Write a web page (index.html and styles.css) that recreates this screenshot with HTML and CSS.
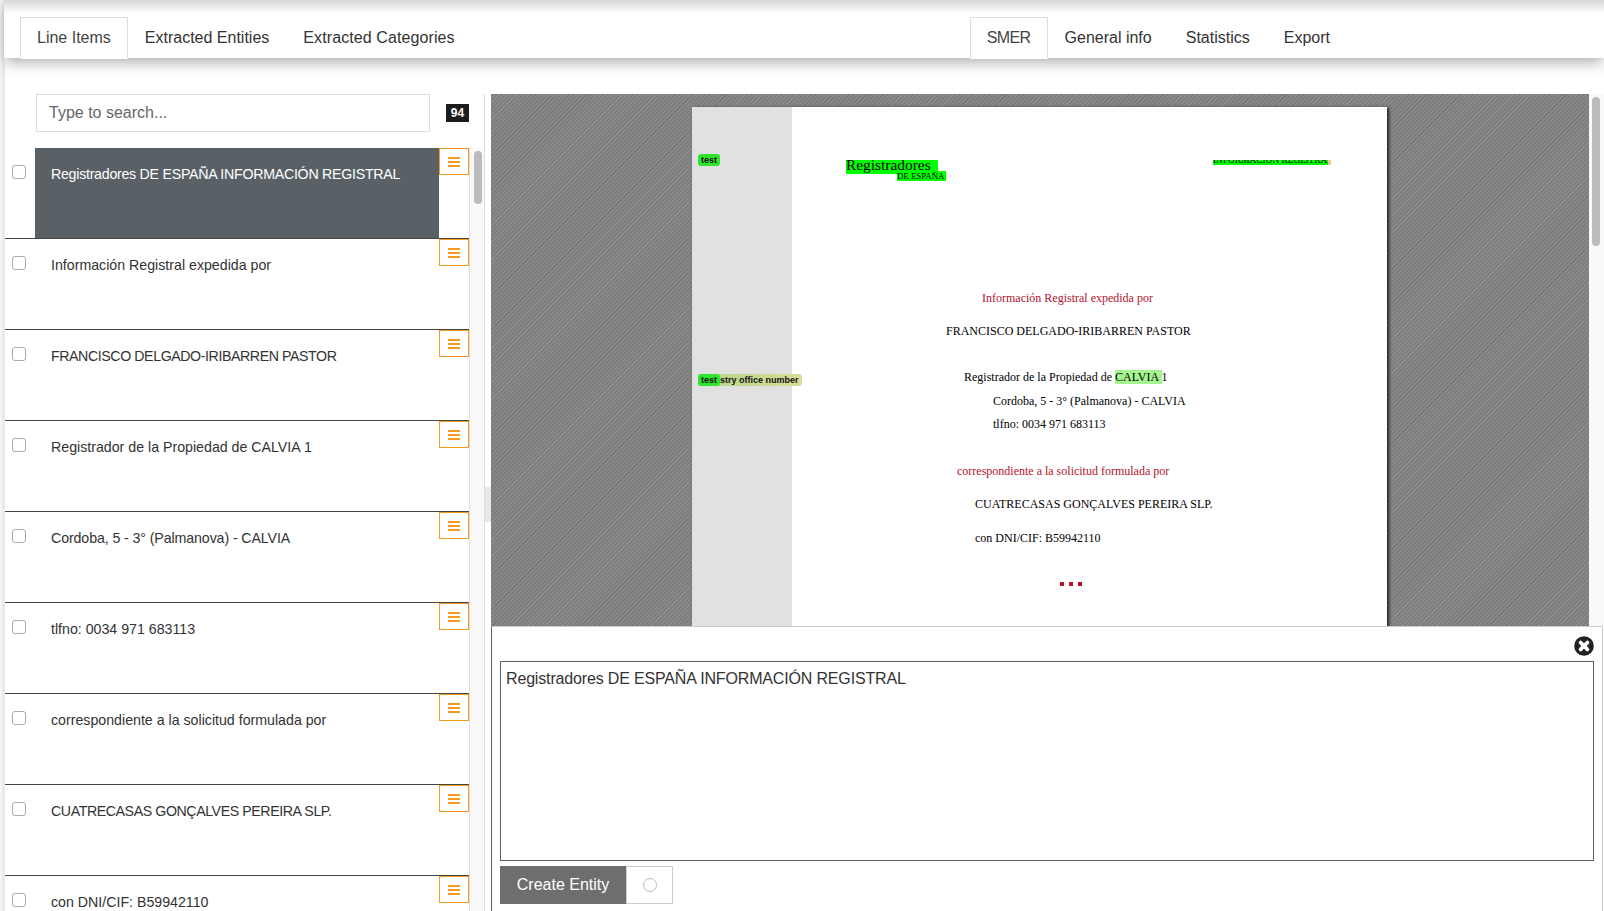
FILE: index.html
```html
<!DOCTYPE html>
<html lang="es">
	<head>
		<meta charset="UTF-8">
		<title>Line Items</title>
		<link rel="stylesheet" href="styles.css">
	</head>
	<body>
		<header class="topbar">
			<nav class="tabs">
				<a class="tab active">Line Items</a>
				<a class="tab">Extracted Entities</a>
				<a class="tab tab-wide">Extracted Categories</a>
			</nav>
			<nav class="tabs tabs-right">
				<a class="tab tab-narrow active">SMER</a>
				<a class="tab">General info</a>
				<a class="tab">Statistics</a>
				<a class="tab">Export</a>
			</nav>
		</header>
		<main class="content">
			<section class="sidebar">
				<div class="search-row">
					<input class="search" type="text" placeholder="Type to search...">
					<span class="count">94</span>
				</div>
				<div class="list-wrap">
					<ul class="list">
						<li class="item selected">
							<input class="check" type="checkbox">
							<div class="item-text">Registradores DE ESPAÑA INFORMACIÓN REGISTRAL</div>
							<button class="burger"><i></i><i></i><i></i></button>
						</li>
						<li class="item">
							<input class="check" type="checkbox">
							<div class="item-text">Información Registral expedida por</div>
							<button class="burger"><i></i><i></i><i></i></button>
						</li>
						<li class="item">
							<input class="check" type="checkbox">
							<div class="item-text caps">FRANCISCO DELGADO-IRIBARREN PASTOR</div>
							<button class="burger"><i></i><i></i><i></i></button>
						</li>
						<li class="item">
							<input class="check" type="checkbox">
							<div class="item-text">Registrador de la Propiedad de CALVIA 1</div>
							<button class="burger"><i></i><i></i><i></i></button>
						</li>
						<li class="item">
							<input class="check" type="checkbox">
							<div class="item-text tight">Cordoba, 5 - 3° (Palmanova) - CALVIA</div>
							<button class="burger"><i></i><i></i><i></i></button>
						</li>
						<li class="item">
							<input class="check" type="checkbox">
							<div class="item-text">tlfno: 0034 971 683113</div>
							<button class="burger"><i></i><i></i><i></i></button>
						</li>
						<li class="item">
							<input class="check" type="checkbox">
							<div class="item-text">correspondiente a la solicitud formulada por</div>
							<button class="burger"><i></i><i></i><i></i></button>
						</li>
						<li class="item">
							<input class="check" type="checkbox">
							<div class="item-text caps">CUATRECASAS GONÇALVES PEREIRA SLP.</div>
							<button class="burger"><i></i><i></i><i></i></button>
						</li>
						<li class="item">
							<input class="check" type="checkbox">
							<div class="item-text">con DNI/CIF: B59942110</div>
							<button class="burger"><i></i><i></i><i></i></button>
						</li>
					</ul>
					<div class="list-scroll"><span></span></div>
				</div>
			</section>
			<section class="viewer">
				<div class="stage">
					<div class="page">
						<div class="page-gutter"></div>
						<span class="tag tag-a">test</span>
						<span class="tag tag-b"><b>test</b>stry office number</span>
						<span class="mark mark-title">Registradores</span>
						<span class="mark mark-sub">DE ESPAÑA</span>
						<span class="mark mark-info">INFORMACIÓN REGISTRAL</span>
						<span class="line red l1">Información Registral expedida por</span>
						<span class="line l2">FRANCISCO DELGADO-IRIBARREN PASTOR</span>
						<span class="line l3">Registrador de la Propiedad de <em>CALVIA </em> 1</span>
						<span class="line l4">Cordoba, 5 - 3° (Palmanova) - CALVIA</span>
						<span class="line l5">tlfno: 0034 971 683113</span>
						<span class="line red l6">correspondiente a la solicitud formulada por</span>
						<span class="line l7">CUATRECASAS GONÇALVES PEREIRA SLP.</span>
						<span class="line l8">con DNI/CIF: B59942110</span>
						<span class="dots"><i></i><i></i><i></i></span>
					</div>
				</div>
				<div class="page-scroll"><span></span></div>
				<div class="editor">
					<div class="close-row">
						<svg class="close" width="20" height="20" viewBox="0 0 20 20">
							<circle cx="10" cy="10" r="9.8" fill="#222"/>
							<path d="M6.6 6.6l6.8 6.8M13.4 6.6l-6.8 6.8" stroke="#fff" stroke-width="3.8" stroke-linecap="round"/>
						</svg>
					</div>
					<textarea class="entity-text">Registradores DE ESPAÑA INFORMACIÓN REGISTRAL</textarea>
					<div class="actions">
						<button class="create">Create Entity</button>
						<span class="radio-box"><i></i></span>
					</div>
				</div>
			</section>
		</main>
	</body>
</html>
```

FILE: styles.css
```css
html, body {
	margin: 0;
	height: 100%;
	overflow: hidden;
}
body {
	font-family: "Liberation Sans", sans-serif;
	color: #333;
	background: linear-gradient(to right, #f8f8f8, #e4e4e4 4px, #f4f4f4 5px, #fff 5px);
}
.topbar {
	height: 58px;
	margin-left: 4px;
	padding-left: 16px;
	box-sizing: border-box;
	display: flex;
	background: linear-gradient(#d6d6d6, #f2f2f2 9px, #fff 13px);
	box-shadow: 0 5px 14px -1px #aaa;
	position: relative;
	z-index: 1;
}
.tabs {
	display: flex;
	height: 42px;
	margin-top: 17px;
}
.tabs-right {
	margin-left: 498px;
}
.tab {
	padding: 0 16px;
	font-size: 16px;
	line-height: 39px;
	border: 1px solid transparent;
	color: #333;
}
.tab-wide {
	letter-spacing: 0.1px;
}
.tab-narrow {
	letter-spacing: -0.6px;
}
.tab.active {
	background-color: #fff;
	border-color: #ddd;
	border-bottom: 1px solid #fff;
	color: #444;
}
.content {
	display: flex;
	height: 853px;
}
.sidebar {
	width: 480px;
	margin-left: 5px;
	margin-top: 36px;
	box-sizing: border-box;
	border-right: 1px solid #ddd;
	position: relative;
	flex: none;
}
/* drag handle between list and viewer */
.sidebar::after {
	content: "";
	position: absolute;
	left: 480px;
	top: 393px;
	width: 6px;
	height: 35px;
	background-color: #e8e8e8;
}
.search-row {
	display: flex;
	align-items: center;
	height: 38px;
	padding-left: 31px;
}
.search {
	width: 394px;
	height: 38px;
	box-sizing: border-box;
	border: 1px solid #ddd;
	padding: 0 12px;
	font-family: inherit;
	font-size: 16px;
	outline: none;
}
.search::placeholder {
	color: #666;
}
.count {
	margin-left: 16px;
	width: 23px;
	height: 18px;
	background-color: #1c1c1c;
	color: #fff;
	font-size: 12px;
	font-weight: bold;
	line-height: 18px;
	text-align: center;
}
.list-wrap {
	display: flex;
	height: 763px;
	margin-top: 16px;
	overflow: hidden;
}
.list {
	list-style: none;
	margin: 0;
	padding: 0;
	width: 465px;
	box-sizing: border-box;
	flex: none;
	border-right: 1px solid #ddd;
}
.item {
	display: flex;
	height: 91px;
	box-sizing: border-box;
	border-bottom: 1px solid #444;
}
.check {
	appearance: none;
	width: 14px;
	height: 14px;
	margin: 17px 0 0 7px;
	border: 1px solid #aaa;
	border-radius: 3px;
	background-color: #fff;
	flex: none;
}
.item-text {
	width: 372px;
	margin-left: 9px;
	padding: 16px 16px 14px;
	font-size: 14.2px;
	line-height: 20px;
	color: #333;
	flex: none;
}
.item-text.caps {
	letter-spacing: -0.42px;
}
.item-text.tight {
	letter-spacing: -0.1px;
}
.selected .item-text {
	background-color: #596066;
	color: #fff;
	letter-spacing: -0.26px;
}
.burger {
	width: 30px;
	height: 27px;
	box-sizing: border-box;
	border: 1px solid #f79a22;
	background-color: #fff;
	padding: 0;
	display: flex;
	flex-direction: column;
	align-items: center;
	justify-content: center;
	gap: 2px;
	flex: none;
}
.burger i {
	display: block;
	width: 12px;
	height: 2px;
	background-color: #f79a22;
}
.list-scroll {
	flex: 1;
	padding: 3px 0 0 4px;
	box-sizing: border-box;
	background-color: #f9f9f9;
}
.list-scroll span {
	display: block;
	width: 8px;
	height: 53px;
	border-radius: 4px;
	background-color: #bbb;
}
.viewer {
	flex: 1;
	margin-left: 6px;
	position: relative;
	margin-top: 36px;
	overflow: hidden;
}
.stage {
	position: absolute;
	left: 0;
	top: 0;
	right: 15px;
	bottom: 0;
	background-color: #808080;
	background-image: repeating-linear-gradient(-45deg, #8b8b8b 0, #8b8b8b 1.5px, #7b7b7b 1.5px, #7b7b7b 3px);
	overflow: hidden;
}
.page {
	position: absolute;
	left: 201px;
	top: 13px;
	width: 695px;
	height: 900px;
	background-color: #fff;
	box-shadow: 2px 1px 3px #222;
	font-family: "Liberation Serif", serif;
	color: #000;
}
.page-gutter {
	position: absolute;
	left: 0;
	top: 0;
	width: 100px;
	height: 100%;
	background-color: #e1e1e1;
}
.tag {
	position: absolute;
	left: 6px;
	height: 12px;
	border-radius: 3px;
	font-family: "Liberation Sans", sans-serif;
	font-size: 9px;
	font-weight: bold;
	line-height: 12px;
	color: #111;
	white-space: nowrap;
}
.tag-a {
	top: 47px;
	width: 22px;
	text-align: center;
	background-color: #2ee52e;
}
.tag-b {
	top: 267px;
	width: 104px;
	background: linear-gradient(to right, #b5d48a, #d8dc96);
}
.tag-b b {
	display: inline-block;
	width: 22px;
	text-align: center;
	border-radius: 3px;
	background-color: #2ee52e;
}
.mark {
	position: absolute;
	background-color: #00ff00;
	overflow: hidden;
	white-space: nowrap;
}
.mark-title {
	left: 154px;
	top: 53px;
	width: 92px;
	height: 14px;
	font-size: 15.4px;
	line-height: 10px;
}
.mark-sub {
	left: 205px;
	top: 64px;
	width: 49px;
	height: 10px;
	font-size: 8.8px;
	line-height: 11px;
}
.mark-info {
	left: 521px;
	top: 53px;
	width: 115px;
	height: 5px;
	font-size: 9.4px;
	line-height: 0;
	box-shadow: 3px 0 0 #f5c98c;
}
.line {
	position: absolute;
	font-size: 12px;
	line-height: 14px;
	white-space: nowrap;
}
.line em {
	font-style: normal;
	background-color: #a4f58f;
}
.red {
	color: #b5112e;
}
.l1 { left: 290px; top: 184px; }
.l2 { left: 254px; top: 217px; }
.l3 { left: 272px; top: 263px; }
.l4 { left: 301px; top: 287px; }
.l5 { left: 301px; top: 310px; }
.l6 { left: 265px; top: 357px; }
.l7 { left: 283px; top: 390px; }
.l8 { left: 283px; top: 424px; }
.dots {
	position: absolute;
	left: 368px;
	top: 475px;
	display: flex;
	gap: 5px;
}
.dots i {
	width: 4px;
	height: 4px;
	background-color: #b5112e;
}
.page-scroll {
	position: absolute;
	right: 0;
	top: 0;
	bottom: 0;
	width: 15px;
	background-color: #f9f9f9;
	padding: 3px 0 0 3px;
	box-sizing: border-box;
}
.page-scroll span {
	display: block;
	width: 8px;
	height: 149px;
	border-radius: 4px;
	background-color: #bbb;
}
.editor {
	position: absolute;
	left: 0;
	right: 1px;
	bottom: 0;
	height: 285px;
	box-sizing: border-box;
	background-color: #fff;
	border-top: 1px solid #ccc;
	border-left: 1px solid #596066;
	border-right: 1px solid #ccc;
	padding: 0 8px;
}
.close-row {
	height: 34px;
	display: flex;
	justify-content: flex-end;
	align-items: flex-end;
}
.close {
	display: block;
	margin-bottom: 5px;
}
.entity-text {
	display: block;
	width: 100%;
	height: 200px;
	box-sizing: border-box;
	border: 1px solid #596066;
	padding: 7px 5px;
	resize: none;
	font-family: inherit;
	font-size: 16px;
	letter-spacing: -0.16px;
	line-height: 20px;
	color: #333;
	outline: none;
}
.actions {
	display: flex;
	margin-top: 5px;
}
.create {
	width: 126px;
	height: 38px;
	border: none;
	background-color: #6e6e6e;
	color: #fff;
	font-family: inherit;
	font-size: 16px;
	padding: 0;
}
.radio-box {
	width: 47px;
	height: 38px;
	box-sizing: border-box;
	border: 1px solid #ccc;
	display: flex;
	align-items: center;
	justify-content: center;
}
.radio-box i {
	width: 12px;
	height: 12px;
	border: 1px solid #bbb;
	border-radius: 50%;
}
```
